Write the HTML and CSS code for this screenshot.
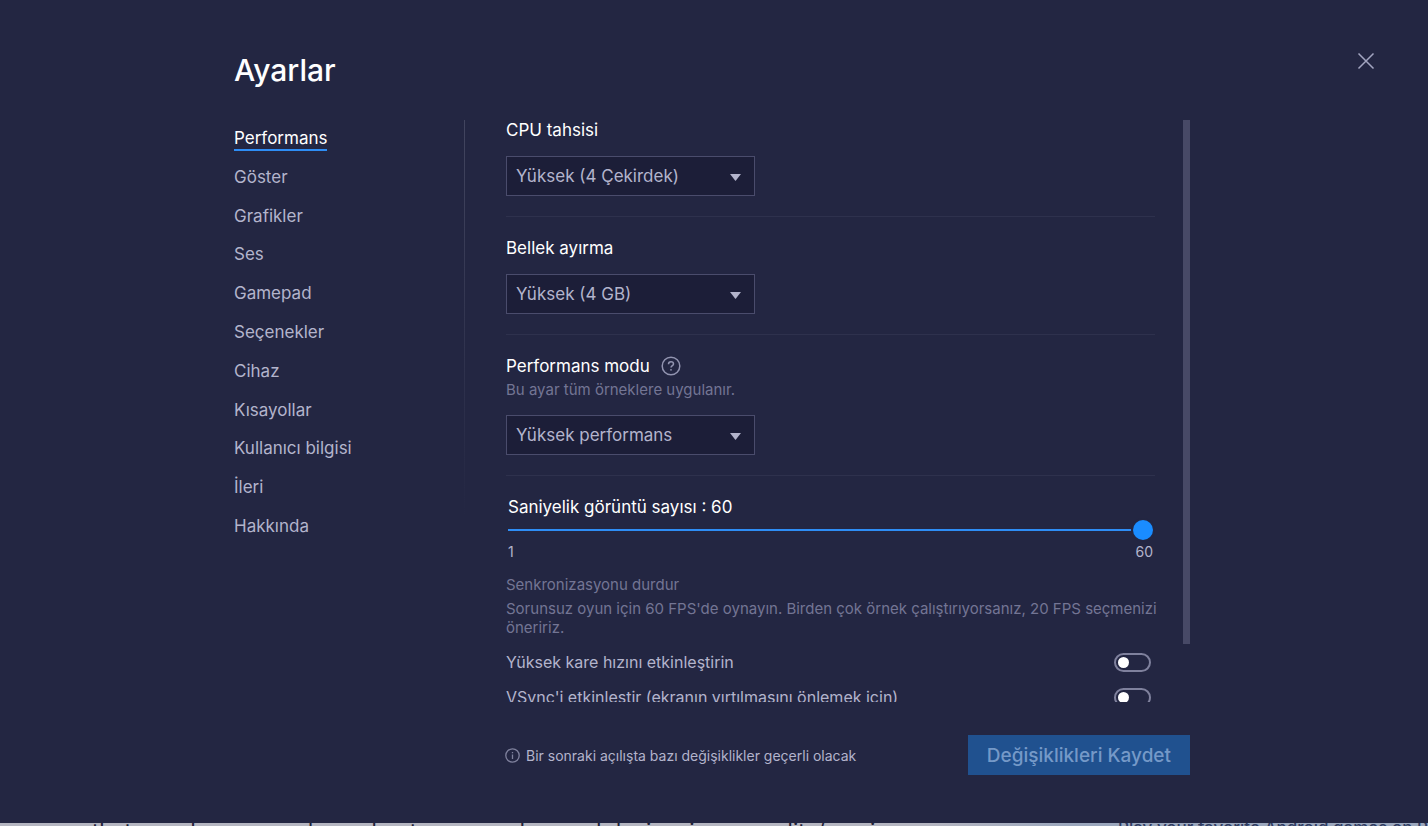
FILE: index.html
```html
<!DOCTYPE html>
<html lang="tr">
<head>
<meta charset="utf-8">
<title>Ayarlar</title>
<link rel="stylesheet" href="styles.css">
</head>
<body>
<main class="settings">
  <header class="header">
    <h1 class="title">Ayarlar</h1>
    <button class="close" type="button" aria-label="Kapat">
      <svg width="18" height="18" viewBox="0 0 18 18"><path d="M1.5 1.5l15 15M16.5 1.5l-15 15" fill="none" stroke="currentColor" stroke-width="1.5"/></svg>
    </button>
  </header>
  <div class="body">
    <nav class="nav">
      <a class="nav-link active" href="#performans">Performans</a>
      <a class="nav-link" href="#goster">Göster</a>
      <a class="nav-link" href="#grafikler">Grafikler</a>
      <a class="nav-link" href="#ses">Ses</a>
      <a class="nav-link" href="#gamepad">Gamepad</a>
      <a class="nav-link" href="#secenekler">Seçenekler</a>
      <a class="nav-link" href="#cihaz">Cihaz</a>
      <a class="nav-link" href="#kisayollar">Kısayollar</a>
      <a class="nav-link" href="#kullanici">Kullanıcı bilgisi</a>
      <a class="nav-link" href="#ileri">İleri</a>
      <a class="nav-link" href="#hakkinda">Hakkında</a>
    </nav>
    <div class="divider"></div>
    <div class="scroll">
      <section class="section">
        <label class="label" for="cpu">CPU tahsisi</label>
        <div class="select-box">
          <select class="select" id="cpu"><option>Yüksek (4 Çekirdek)</option></select>
          <svg class="arrow" width="11" height="7" viewBox="0 0 11 7"><path d="M0 0h11L5.500 7z" fill="currentColor"/></svg>
        </div>
      </section>
      <section class="section">
        <label class="label" for="memory">Bellek ayırma</label>
        <div class="select-box">
          <select class="select" id="memory"><option>Yüksek (4 GB)</option></select>
          <svg class="arrow" width="11" height="7" viewBox="0 0 11 7"><path d="M0 0h11L5.500 7z" fill="currentColor"/></svg>
        </div>
      </section>
      <section class="section">
        <div class="label-row">
          <label class="label" for="mode">Performans modu</label>
          <svg class="help" width="20" height="20" viewBox="0 0 20 20" fill="none" stroke="currentColor" stroke-width="1.500"><circle cx="10" cy="10" r="8.800"/><path d="M7.500 8.200c0-1.500 1.100-2.500 2.500-2.500s2.500.9 2.500 2.200c0 1.600-2.500 1.800-2.500 3.700"/><circle cx="10" cy="13.800" r=".9" fill="currentColor" stroke="none"/></svg>
        </div>
        <p class="hint">Bu ayar tüm örneklere uygulanır.</p>
        <div class="select-box">
          <select class="select" id="mode"><option>Yüksek performans</option></select>
          <svg class="arrow" width="11" height="7" viewBox="0 0 11 7"><path d="M0 0h11L5.500 7z" fill="currentColor"/></svg>
        </div>
      </section>
      <section class="section">
        <div class="slider">
          <label class="label" for="fps">Saniyelik görüntü sayısı : 60</label>
          <input class="range" id="fps" type="range" min="1" max="60" value="60">
          <div class="range-ends"><span>1</span><span>60</span></div>
        </div>
        <p class="sync">Senkronizasyonu durdur</p>
        <p class="note">Sorunsuz oyun için 60 FPS'de oynayın. Birden çok örnek çalıştırıyorsanız, 20 FPS seçmenizi öneririz.</p>
        <div class="toggle-row">
          <label for="high-fps">Yüksek kare hızını etkinleştirin</label>
          <input class="toggle" id="high-fps" type="checkbox">
        </div>
        <div class="toggle-row">
          <label for="vsync">VSync'i etkinleştir (ekranın yırtılmasını önlemek için)</label>
          <input class="toggle" id="vsync" type="checkbox">
        </div>
      </section>
    </div>
    <div class="scrollbar"><div class="thumb"></div></div>
  </div>
  <footer class="footer">
    <svg class="info" width="15" height="15" viewBox="0 0 15 15"><circle cx="7.500" cy="7.500" r="6.700" fill="none" stroke="currentColor" stroke-width="1.300"/><path d="M7.500 6.500v4.500M7.500 4v1.300" stroke="currentColor" stroke-width="1.300"/></svg>
    <span class="restart">Bir sonraki açılışta bazı değişiklikler geçerli olacak</span>
    <button class="save" type="button">Değişiklikleri Kaydet</button>
  </footer>
</main>
<div class="backdrop">
  <p class="backdrop-text">that can do more and so robust on any advanced device, in our reality/gaming</p>
  <p class="backdrop-side">Play your favorite Android games on PC</p>
</div>
</body>
</html>
```
FILE: styles.css
```css
* { box-sizing: border-box; }

body {
  margin: 0;
  min-height: 100vh;
  display: flex;
  flex-direction: column;
  background: #232642;
  color: #b3b4cc;
  font-family: Inter, Roboto, sans-serif;
  font-size: 17px;
}

h1, p { margin: 0; }
button, select, input { font: inherit; margin: 0; }

.settings {
  flex: 1;
  padding: 50px 238px 0 234px;
}

.header {
  display: flex;
  justify-content: space-between;
  align-items: flex-start;
  height: 70px;
  margin-right: -187px;
}

.title {
  color: #fff;
  font-size: 30px;
  line-height: 40px;
  font-weight: 500;
}

.close {
  display: flex;
  padding: 2px;
  border: 0;
  background: none;
  color: #a3a5c0;
}

.body {
  display: flex;
  height: 582px;
}

.nav {
  flex: 0 0 230px;
  display: flex;
  flex-direction: column;
  align-items: flex-start;
  justify-content: space-between;
  height: 419px;
  padding-top: 7px;
}

.nav-link {
  color: inherit;
  line-height: 22px;
  text-decoration: none;
  border-bottom: 2px solid transparent;
}

.nav-link.active {
  color: #fff;
  border-color: #2e8df5;
}

.divider {
  width: 1px;
  height: 400px;
  background: linear-gradient(#42455f, #232642);
}

.scroll {
  flex: 1;
  overflow: hidden;
  padding: 0 28px 0 41px;
}

.section {
  padding: 21px 0 20px;
  border-bottom: 1px solid #2e314d;
}

.section:first-child { padding-top: 0; }

.label {
  display: block;
  color: #fff;
  line-height: 20px;
}

.label-row {
  display: flex;
  gap: 11px;
}

.help { color: #9294b0; }

.hint {
  margin-top: 5px;
  color: #737594;
  font-size: 15px;
  line-height: 18px;
}

.select-box {
  display: grid;
  align-items: center;
  width: 249px;
  margin-top: 16px;
}

.select {
  grid-area: 1 / 1;
  height: 40px;
  padding: 0 9px;
  border: 1px solid #4a4c6c;
  border-radius: 0;
  background: #1c1e38;
  color: #b3b4cc;
  appearance: none;
}

.arrow {
  grid-area: 1 / 1;
  justify-self: end;
  margin: 2px 14px 0 0;
  pointer-events: none;
}

.slider { padding: 0 2px; }

.range {
  display: block;
  width: 100%;
  height: 20px;
  margin-top: 3px;
  appearance: none;
  background: linear-gradient(#2e8df5, #2e8df5) center / 100% 2px no-repeat;
}

.range::-webkit-slider-thumb {
  appearance: none;
  width: 20px;
  height: 20px;
  border-radius: 50%;
  background: #1a8cff;
  box-shadow: 0 0 0 2px #232642;
}

.range-ends {
  display: flex;
  justify-content: space-between;
  margin-top: 2px;
  font-size: 14px;
  line-height: 20px;
}

.sync, .note {
  color: #737594;
  font-size: 15px;
  line-height: 19px;
}

.sync { margin-top: 13px; }
.note { margin: 5px -12px 12px 0; }

.toggle-row {
  display: flex;
  align-items: center;
  justify-content: space-between;
  height: 26px;
  margin: 0 4px 9px 0;
  font-size: 16px;
}

.toggle {
  display: flex;
  align-items: center;
  width: 37px;
  height: 19px;
  padding: 0 2px;
  border: 2px solid #7f819d;
  border-radius: 10px;
  appearance: none;
}

.toggle::before {
  content: "";
  width: 11px;
  height: 11px;
  border-radius: 50%;
  background: #fff;
}

.scrollbar { width: 7px; }

.thumb {
  height: 90%;
  background: #474966;
}

.footer {
  display: flex;
  align-items: center;
  padding: 33px 0 0 271px;
  font-size: 14px;
}

.info { color: #7f819d; }
.restart { margin: 0 auto 0 6px; }

.save {
  height: 40px;
  padding: 0 19px;
  border: 0;
  background: #20518f;
  color: #7599c8;
  font-size: 19px;
  font-weight: 500;
}

.backdrop {
  display: flex;
  height: 3px;
  overflow: hidden;
  padding-left: 92px;
  background: linear-gradient(90deg, #b5b6c1 65%, #9ba7bd 75%);
  color: #202136;
  font-size: 22px;
  line-height: 17px;
  white-space: nowrap;
}

.backdrop-text { flex: 0 0 1026px; }

.backdrop-side {
  color: #303d63;
  font-size: 17px;
  font-weight: 500;
  line-height: 10px;
}
```
